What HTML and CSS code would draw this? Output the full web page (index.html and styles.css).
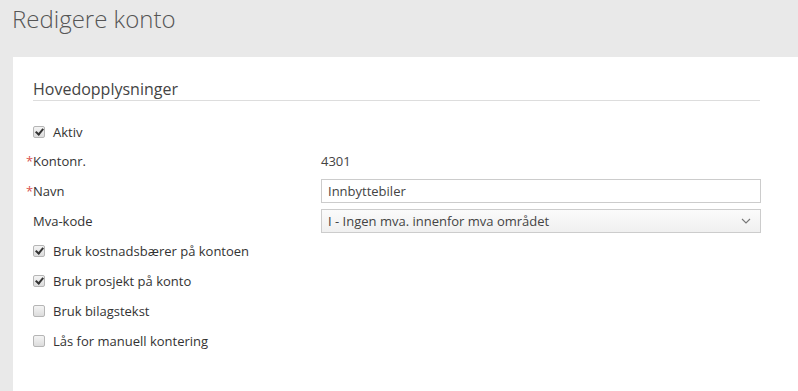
FILE: index.html
```html
<!DOCTYPE html>
<html lang="no">
<head>
    <meta charset="UTF-8">
    <title>Redigere konto</title>
    <link rel="stylesheet" href="styles.css">
</head>
<body>

<div class="page-header">
    <h1>Redigere konto</h1>
</div>

<div class="card">
    <h2 class="section-title">Hovedopplysninger</h2>

    <div class="form">
        <div class="row row-first">
            <label class="check"><span class="box checked"></span>Aktiv</label>
        </div>
        <div class="row">
            <span class="label"><span class="req">*</span>Kontonr.</span>
            <span class="value">4301</span>
        </div>
        <div class="row">
            <span class="label"><span class="req">*</span>Navn</span>
            <div class="input">Innbyttebiler</div>
        </div>
        <div class="row">
            <span class="label">Mva-kode</span>
            <div class="input select">
                <span>I - Ingen mva. innenfor mva området</span>
                <svg class="chevron" width="10" height="6" viewBox="0 0 10 6">
                    <path d="M1 1 L5 5 L9 1" fill="none" stroke="#777" stroke-width="1.1"/>
                </svg>
            </div>
        </div>
        <div class="row">
            <label class="check"><span class="box checked"></span>Bruk kostnadsbærer på kontoen</label>
        </div>
        <div class="row">
            <label class="check"><span class="box checked"></span>Bruk prosjekt på konto</label>
        </div>
        <div class="row">
            <label class="check"><span class="box"></span>Bruk bilagstekst</label>
        </div>
        <div class="row">
            <label class="check"><span class="box"></span>Lås for manuell kontering</label>
        </div>
    </div>
</div>

</body>
</html>
```

FILE: styles.css
```css
/* Page */
body {
    margin: 0;
    background-color: #e9e9e9;
    font-family: "Open Sans", Arial, sans-serif;
    font-size: 13px;
    color: #333;
    height: 391px;
    overflow: hidden;
}

.page-header {
    height: 57px;
    padding: 0 12px;
}

.page-header h1 {
    margin: 0;
    font-size: 24px;
    font-weight: 300;
    line-height: 37px;
    color: #555;
}

/* Card */
.card {
    box-sizing: border-box;
    margin-left: 13px;
    background-color: #fff;
    height: 334px;
    padding: 21px 37px 0 20px;
}

.section-title {
    margin: 0;
    font-size: 16px;
    font-weight: 400;
    line-height: 22px;
    color: #444;
    border-bottom: 1px solid #ddd;
    margin-right: 1px;
}

.form {
    margin-top: 17px;
}

.row {
    display: flex;
    align-items: center;
    height: 30px;
}

.row-first {
    height: 28px;
}

.label {
    position: relative;
    width: 288px;
    flex-shrink: 0;
}

.req {
    position: absolute;
    left: -7px;
    top: 0;
    color: #d9534f;
}

.value {
    color: #444;
}

.input {
    flex: 1;
    box-sizing: border-box;
    height: 24px;
    line-height: 22px;
    padding: 0 6px;
    border: 1px solid #ccc;
    background-color: #fff;
    color: #444;
}

.select {
    display: flex;
    align-items: center;
    justify-content: space-between;
    background: linear-gradient(to bottom, #fbfbfb, #f0f0f0);
    padding-right: 9px;
}

/* Checkboxes */
.check {
    display: flex;
    align-items: center;
    gap: 8px;
}

.box {
    box-sizing: border-box;
    width: 12px;
    height: 12px;
    border: 1px solid #b5b5b5;
    border-radius: 2px;
    background: linear-gradient(to bottom, #f4f4f4, #dcdcdc);
    position: relative;
}

.box.checked::after {
    content: "";
    position: absolute;
    left: 3px;
    top: 0px;
    width: 3px;
    height: 6px;
    border: solid #333;
    border-width: 0 2px 2px 0;
    transform: rotate(40deg);
}
```
